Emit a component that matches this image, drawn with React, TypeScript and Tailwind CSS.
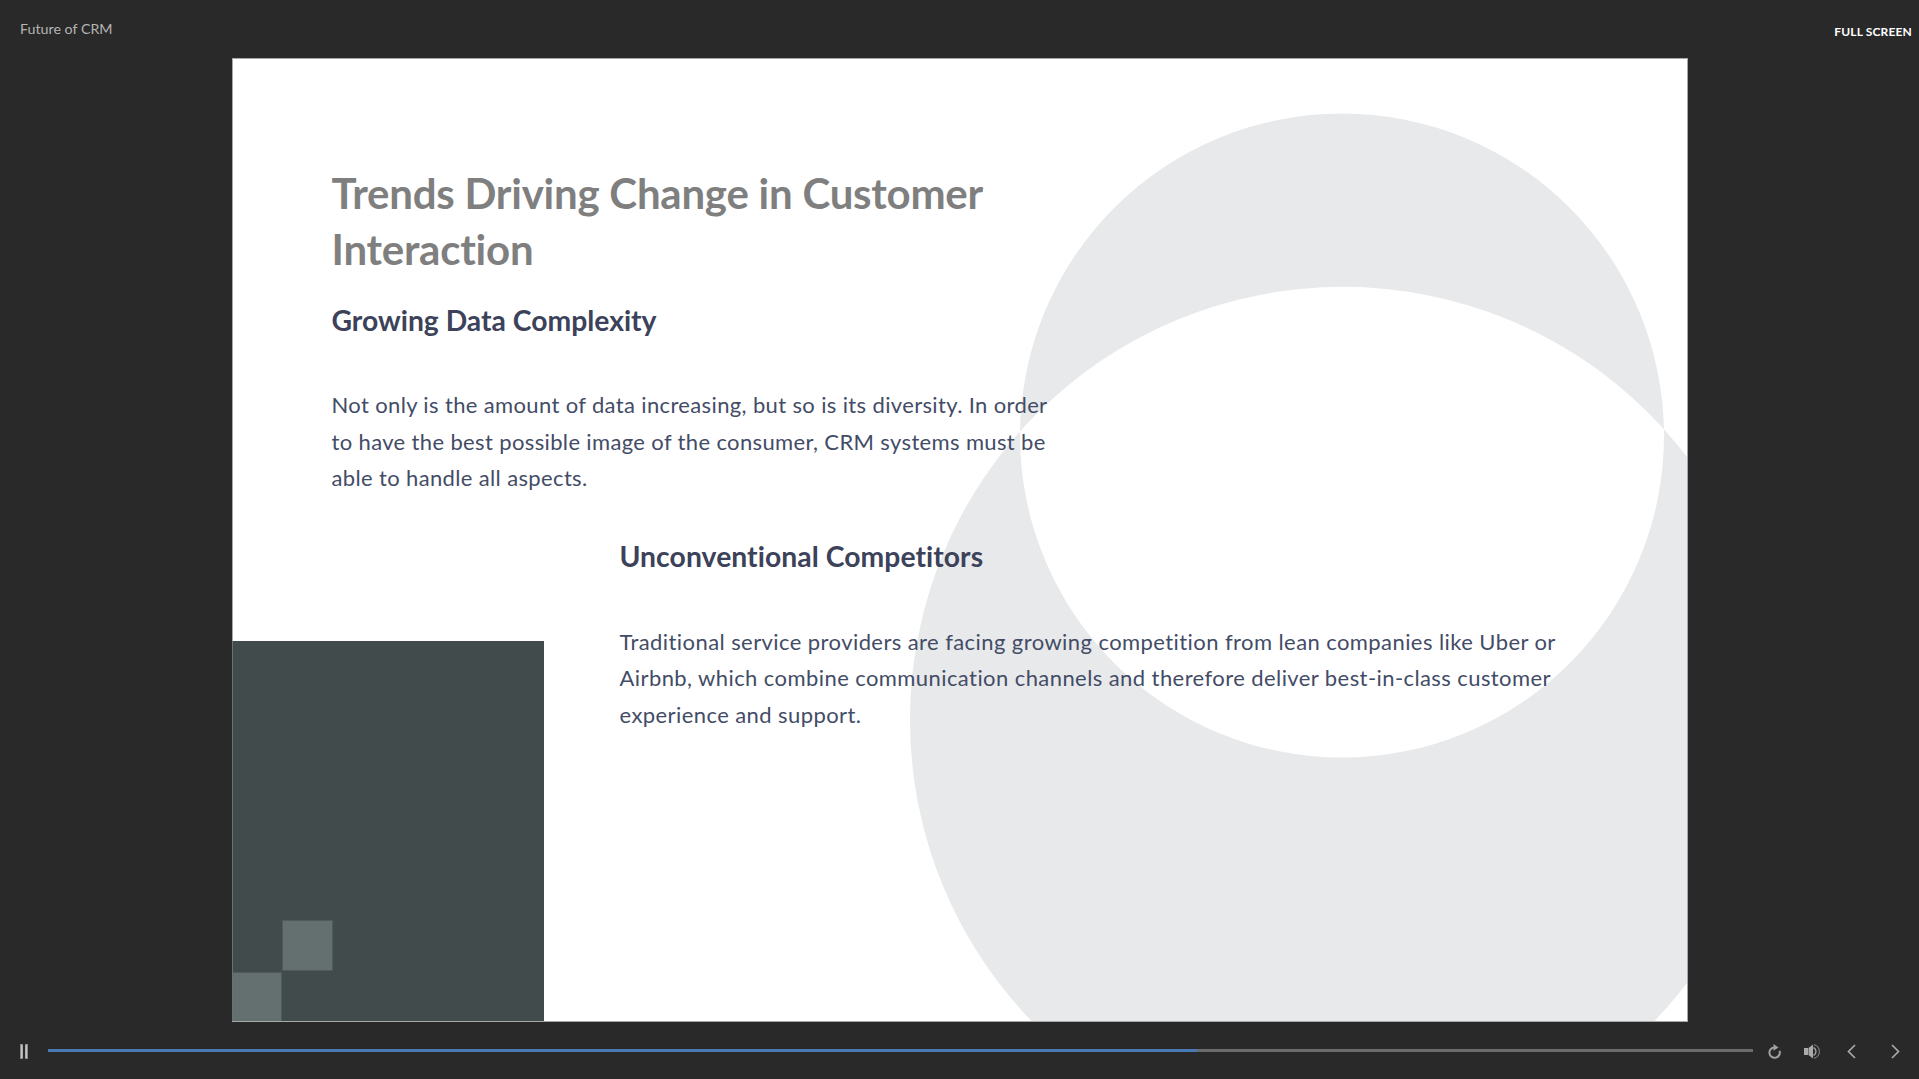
const Art = () => (
  <svg className="absolute inset-0" width="1456" height="964" viewBox="0 0 1456 964">
    <path
      fillRule="evenodd"
      fill="#e8e9ea"
      d="M788 377.5a322 322 0 1 0 644 0a322 322 0 1 0 -644 0Z M678 662a433 433 0 1 0 866 0a433 433 0 1 0 -866 0Z"
    />
  </svg>
);

const Controls = () => (
  <div className="flex h-[57px] items-start pt-[22px]">
    <svg className="ml-5 w-2 h-[15px]" viewBox="0 0 8 15">
      <rect x="0" y="0" width="3" height="15" fill="#8a8a8a" />
      <rect x="1" y="1" width="1.6" height="13" fill="#c4c4c4" />
      <rect x="5" y="0" width="3" height="15" fill="#8a8a8a" />
      <rect x="5.4" y="1" width="1.6" height="13" fill="#c4c4c4" />
    </svg>
    <div className="ml-5 mt-[5px] flex h-[3px] w-[1705px] bg-[#6b6b6b]">
      <div className="h-full w-[1149px] bg-[#4a7ab6]" />
    </div>
    <svg className="ml-[14px] h-[15px] w-[14px]" viewBox="0 0 14 15" fill="none" stroke="#a0a0a0" strokeWidth="2">
      <path d="M7.5 3.4a5.2 5.2 0 1 0 5 3.4" />
      <path d="M6.5 0l5 3.4-5 3.4z" fill="#a0a0a0" stroke="none" />
    </svg>
    <svg className="ml-[23px] h-[15px] w-[16px]" viewBox="0 0 16 15" fill="none">
      <rect x="0" y="4" width="4" height="7" fill="#ababab" />
      <path d="M4.5 4L9 0.5v14L4.5 11z" fill="#ababab" />
      <path d="M9.5 3.5a4.5 4.5 0 0 1 0 8" stroke="#a0a0a0" strokeWidth="1.5" />
      <path d="M10 0.7a7 7 0 0 1 0 13.6" stroke="#909090" strokeWidth="1" />
    </svg>
    <svg className="ml-[27px] h-[15px] w-[9px]" viewBox="0 0 9 15" fill="none" stroke="#a8a8a8" strokeWidth="1.7">
      <path d="M8 1L1.5 7.5L8 14" />
    </svg>
    <svg className="ml-[35px] h-[15px] w-[9px]" viewBox="0 0 9 15" fill="none" stroke="#a8a8a8" strokeWidth="1.7">
      <path d="M1 1l6.5 6.5L1 14" />
    </svg>
  </div>
);

export default function App() {
  return (
    <div className="flex h-[1079px] w-[1919px] flex-col overflow-hidden bg-[#292929] font-['Lato',sans-serif]">
      <header className="flex h-[58px] items-start justify-between pl-5 pr-[7px]">
        <span className="mt-5 text-[14.25px] leading-[18px] text-[#b4b4b4]">Future of CRM</span>
        <span className="mt-[23px] text-[12px] leading-[18px] font-bold tracking-[0.15px] text-white">FULL SCREEN</span>
      </header>
      <main className="relative mx-auto h-[964px] w-[1456px] overflow-hidden bg-white [font-variant-ligatures:none]">
        <Art />
        <div className="absolute inset-0 border border-[#a8a8a8]" />
        <div className="absolute bottom-px left-0 h-[380px] w-[312px] border-l border-[#6a7272] bg-[#414b4c]">
          <div className="absolute bottom-[50px] left-[49px] size-[51px] border border-[#505a5a] bg-[#647070]" />
          <div className="absolute bottom-0 left-0 size-[49px] border-t border-r border-[#505a5a] bg-[#647070]" />
        </div>
        <div className="relative pl-[100px] pt-[107px] text-[#434c66]">
          <h1 className="w-[720px] text-[42px] leading-[56px] font-bold tracking-[-0.24px] text-[#7f7f7f]">
            Trends Driving Change in Customer Interaction
          </h1>
          <h2 className="mt-[25px] text-[28.3px] leading-[36px] font-bold text-[#3b4259]">Growing Data Complexity</h2>
          <p className="mt-[49px] w-[730px] text-[22px] leading-[36.5px] tracking-[0.36px]">
            Not only is the amount of data increasing, but so is its diversity. In order to have the best possible image of the consumer, CRM systems must be able to handle all aspects.
          </p>
          <div className="ml-[288px]">
            <h2 className="mt-[41px] text-[28.3px] leading-[36px] font-bold tracking-[0.06px] text-[#3b4259]">Unconventional Competitors</h2>
            <p className="mt-[50px] w-[960px] text-[22px] leading-[36.5px] tracking-[0.42px]">
              Traditional service providers are facing growing competition from lean companies like Uber or Airbnb, which combine communication channels and therefore deliver best-in-class customer experience and support.
            </p>
          </div>
        </div>
      </main>
      <Controls />
    </div>
  );
}
